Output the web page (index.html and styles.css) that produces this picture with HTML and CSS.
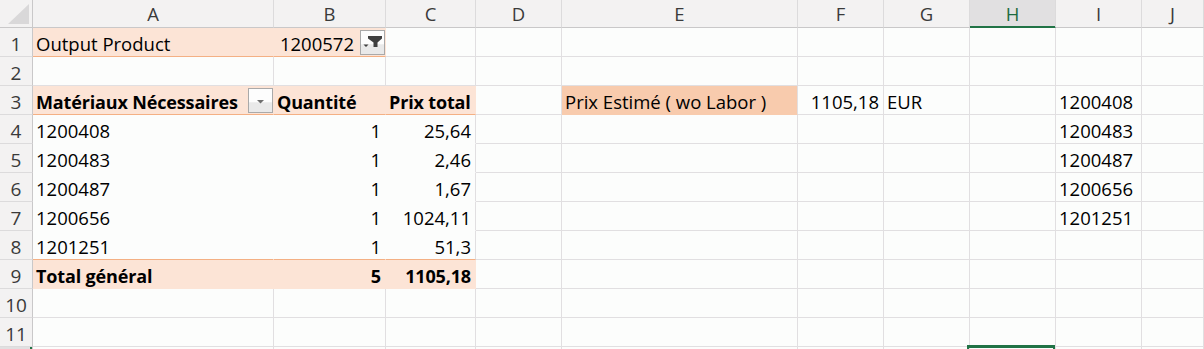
FILE: index.html
```html
<!DOCTYPE html>
<html lang="fr">
<head>
<meta charset="utf-8">
<title>Feuille</title>
<link rel="stylesheet" href="styles.css">
</head>
<body>
<div class="sheet">
  <div class="corner"><svg width="21" height="20" viewBox="0 0 21 20"><polygon points="21,0 21,20 0,20" fill="#d9d8d9"/></svg></div>
  <div class="ch">A</div><div class="ch">B</div><div class="ch">C</div><div class="ch">D</div><div class="ch">E</div><div class="ch">F</div><div class="ch">G</div><div class="ch sel">H</div><div class="ch">I</div><div class="ch">J</div>

  <div class="rh">1</div>
  <div class="c pv ob">Output Product</div>
  <div class="c pv ob r nopr">1200572<span class="fbtn"><svg width="23" height="23" viewBox="0 0 23 23"><path d="M7 5h14v2.5l-4.5 4V16h-4v-4.5L7 7.5z" fill="#3f3f3f"/><path d="M2.5 13.5h5l-2.5 2.5z" fill="#3f3f3f"/></svg></span></div>
  <div class="c"></div><div class="c"></div><div class="c"></div><div class="c"></div><div class="c"></div><div class="c"></div><div class="c"></div><div class="c"></div>

  <div class="rh">2</div>
  <div class="c"></div><div class="c"></div><div class="c"></div><div class="c"></div><div class="c"></div><div class="c"></div><div class="c"></div><div class="c"></div><div class="c"></div><div class="c"></div>

  <div class="rh">3</div>
  <div class="c pv ob b sb nopr">Matériaux Nécessaires<span class="fbtn"><svg width="23" height="23" viewBox="0 0 23 23"><path d="M8 11h7l-3.5 3.5z" fill="#6f6f6f"/></svg></span></div>
  <div class="c pv ob b">Quantité</div>
  <div class="c pv ob b">Prix total</div>
  <div class="c"></div>
  <div class="c e3">Prix Estimé ( wo Labor )</div>
  <div class="c r">1105,18</div>
  <div class="c">EUR</div>
  <div class="c"></div>
  <div class="c">1200408</div>
  <div class="c"></div>

  <div class="rh">4</div>
  <div class="c wf">1200408</div><div class="c wf r">1</div><div class="c wf r gr">25,64</div>
  <div class="c"></div><div class="c"></div><div class="c"></div><div class="c"></div><div class="c"></div><div class="c">1200483</div><div class="c"></div>

  <div class="rh">5</div>
  <div class="c wf">1200483</div><div class="c wf r">1</div><div class="c wf r gr">2,46</div>
  <div class="c"></div><div class="c"></div><div class="c"></div><div class="c"></div><div class="c"></div><div class="c">1200487</div><div class="c"></div>

  <div class="rh">6</div>
  <div class="c wf">1200487</div><div class="c wf r">1</div><div class="c wf r gr">1,67</div>
  <div class="c"></div><div class="c"></div><div class="c"></div><div class="c"></div><div class="c"></div><div class="c">1200656</div><div class="c"></div>

  <div class="rh">7</div>
  <div class="c wf">1200656</div><div class="c wf r">1</div><div class="c wf r gr">1024,11</div>
  <div class="c"></div><div class="c"></div><div class="c"></div><div class="c"></div><div class="c"></div><div class="c">1201251</div><div class="c"></div>

  <div class="rh">8</div>
  <div class="c wf ob">1201251</div><div class="c wf ob r">1</div><div class="c wf ob r gr">51,3</div>
  <div class="c"></div><div class="c"></div><div class="c"></div><div class="c"></div><div class="c"></div><div class="c"></div><div class="c"></div>

  <div class="rh">9</div>
  <div class="c pv b">Total général</div><div class="c pv b r">5</div><div class="c pv b r">1105,18</div>
  <div class="c"></div><div class="c"></div><div class="c"></div><div class="c"></div><div class="c"></div><div class="c"></div><div class="c"></div>

  <div class="rh">10</div>
  <div class="c"></div><div class="c"></div><div class="c"></div><div class="c"></div><div class="c"></div><div class="c"></div><div class="c"></div><div class="c"></div><div class="c"></div><div class="c"></div>

  <div class="rh">11</div>
  <div class="c"></div><div class="c"></div><div class="c"></div><div class="c"></div><div class="c"></div><div class="c"></div><div class="c"></div><div class="c"></div><div class="c"></div><div class="c"></div>

  <div class="rh sel"></div>
  <div class="c"></div><div class="c"></div><div class="c"></div><div class="c"></div><div class="c"></div><div class="c"></div><div class="c"></div><div class="c active"></div><div class="c"></div><div class="c"></div>
</div>
</body>
</html>
```

FILE: styles.css
```css
* {
  box-sizing: border-box;
  margin: 0;
  padding: 0;
}

html, body {
  width: 1204px;
  height: 349px;
  overflow: hidden;
}

body {
  background: #fcfdfc;
  font-family: "Open Sans", "DejaVu Sans", sans-serif;
  font-size: 18.5px;
  color: #000;
}

.sheet {
  display: grid;
  grid-template-columns: 33px 241px 112px 90px 86px 236px 86px 86px 86px 86px 1fr;
  grid-template-rows: 28px repeat(12, 29px);
}

.corner {
  background: #f3f2f2;
  border-right: 1px solid #c9c8c9;
  border-bottom: 1px solid #c9c8c9;
  display: flex;
  align-items: flex-end;
  justify-content: flex-end;
  padding: 0 3px 3px 0;
}

.corner svg {
  display: block;
}

.ch {
  background: #f3f2f2;
  border-right: 1px solid #dcdbdc;
  border-bottom: 1px solid #c9c8c9;
  color: #3a3a3a;
  font-size: 18.5px;
  line-height: 26px;
  padding-top: 1px;
  text-align: center;
}

.ch.sel {
  background: #e1e0e1;
  color: #1d6b40;
  border-bottom-color: #217346;
  box-shadow: inset 0 -1px 0 #217346;
}

.rh {
  background: #f3f2f2;
  border-right: 1px solid #c9c8c9;
  border-bottom: 1px solid #dcdbdc;
  color: #3a3a3a;
  display: flex;
  align-items: flex-end;
  justify-content: center;
  line-height: 24px;
  font-size: 19px;
}

.rh.sel {
  background: #e1e0e1;
  color: #1d6b40;
  box-shadow: inset -2px 0 0 #217346;
}

.c {
  border-right: 1px solid #e1dfe1;
  border-bottom: 1px solid #e1dfe1;
  display: flex;
  align-items: flex-end;
  padding: 0 3px;
  line-height: 24px;
  white-space: nowrap;
}

.c.r {
  justify-content: flex-end;
  padding-right: 4px;
}

.c.sb {
  justify-content: space-between;
}

.c.nopr {
  padding-right: 0;
}

.c.b {
  font-weight: 700;
  font-size: 18px;
  letter-spacing: -0.15px;
}

.pv {
  background: #fce4d6;
  border-color: #fce4d6;
}

.wf {
  background: #fcfdfc;
  border-color: #fcfdfc;
}

.c.gr {
  border-right-color: #e1dfe1;
}

.c.ob {
  border-bottom-color: #f4b084;
}

.e3 {
  background: #f8cbad;
  border-bottom-color: #f8cbad;
}

.fbtn {
  flex: none;
  width: 25px;
  height: 25px;
  margin-left: 6px;
  margin-bottom: 1px;
  border: 1px solid #a9a9a9;
  background: linear-gradient(#fdfdfd 0, #fdfdfd 55%, #e9e9e9 60%, #e9e9e9 100%);
  display: block;
  letter-spacing: 0;
}

.fbtn svg {
  display: block;
}

.c.active {
  position: relative;
}

.c.active::after {
  content: "";
  position: absolute;
  top: -2px;
  left: -3px;
  right: 0;
  height: 20px;
  border: 2px solid #217346;
  border-top-width: 3px;
}
```
